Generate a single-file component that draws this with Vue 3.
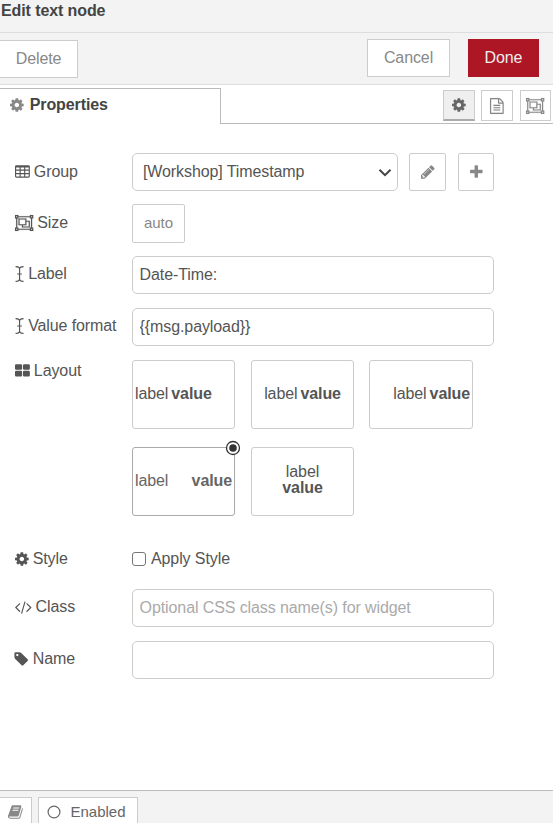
<script setup>
import { h, ref } from 'vue'

const icons = {
  cog: { w: 1536, x: 128, d: 'M1152 896q0-106-75-181t-181-75-181 75-75 181 75 181 181 75 181-75 75-181zm512-109v222q0 12-8 23t-20 13l-185 28q-19 54-39 91 35 50 107 138 10 12 10 25t-9 23q-27 37-99 108t-94 71q-12 0-26-9l-138-108q-44 23-91 38-16 136-29 186-7 28-36 28h-222q-14 0-24.5-8.5t-11.5-21.5l-28-184q-49-16-90-37l-141 107q-10 9-25 9-14 0-25-11-126-114-165-168-7-10-7-23 0-12 8-23 15-21 51-66.5t54-70.5q-27-50-41-99l-183-27q-13-2-21-12.5t-8-23.5v-222q0-12 8-23t19-13l186-28q14-46 39-92-40-57-107-138-10-12-10-24 0-10 9-23 26-36 98.5-107.5t94.5-71.5q13 0 26 10l138 107q44-23 91-38 16-136 29-186 7-28 36-28h222q14 0 24.5 8.5t11.5 21.5l28 184q49 16 90 37l142-107q9-9 24-9 13 0 25 10 129 119 165 170 7 8 7 22 0 12-8 23-15 21-51 66.5t-54 70.5q26 50 41 98l183 28q13 2 21 12.5t8 23.5z' },
  pencil: { w: 1536, x: 128, d: 'M491 1536l91-91-235-235-91 91v107h128v128h107zm523-928q0-22-22-22-10 0-17 7l-542 542q-7 7-7 17 0 22 22 22 10 0 17-7l542-542q7-7 7-17zm-54-192l416 416-832 832h-416v-416zm683 96q0 53-37 90l-166 166-416-416 166-165q36-38 90-38 53 0 91 38l235 234q37 39 37 91z' },
  plus: { w: 1408, x: 192, d: 'M1600 736v192q0 40-28 68t-68 28h-416v416q0 40-28 68t-68 28h-192q-40 0-68-28t-28-68v-416h-416q-40 0-68-28t-28-68v-192q0-40 28-68t68-28h416v-416q0-40 28-68t68-28h192q40 0 68 28t28 68v416h416q40 0 68 28t28 68z' },
  file: { w: 1536, x: 128, s: 10, d: 'M1596 380q28 28 48 76t20 88v1152q0 40-28 68t-68 28h-1344q-40 0-68-28t-28-68v-1600q0-40 28-68t68-28h896q40 0 88 20t76 48zm-444-244v376h376q-10-29-22-41l-313-313q-12-12-41-22zm384 1528v-1024h-416q-40 0-68-28t-28-68v-416h-768v1536h1280zm-1024-864q0-14 9-23t23-9h704q14 0 23 9t9 23v64q0 14-9 23t-23 9h-704q-14 0-23-9t-9-23v-64zm736 224q14 0 23 9t9 23v64q0 14-9 23t-23 9h-704q-14 0-23-9t-9-23v-64q0-14 9-23t23-9h704zm0 256q14 0 23 9t9 23v64q0 14-9 23t-23 9h-704q-14 0-23-9t-9-23v-64q0-14 9-23t23-9h704z' },
  tag: { w: 1536, x: 192, d: 'M576 448q0-53-37.5-90.5t-90.5-37.5-90.5 37.5-37.5 90.5 37.5 90.5 90.5 37.5 90.5-37.5 37.5-90.5zm1067 576q0 53-37 90l-491 492q-39 37-91 37-53 0-90-37l-715-716q-38-37-64.5-101t-26.5-117v-416q0-52 38-90t90-38h416q53 0 117 26.5t102 64.5l715 714q37 39 37 91z' },
  code: { w: 1856, x: -32, d: 'M553 1399l-50 50q-10 10-23 10t-23-10l-466-466q-10-10-10-23t10-23l466-466q10-10 23-10t23 10l50 50q10 10 10 23t-10 23l-393 393 393 393q10 10 10 23t-10 23zm591-1067l-373 1291q-4 13-15.5 19.5t-23.5 2.5l-62-17q-13-4-19.5-15.5t-2.5-24.5l373-1291q4-13 15.5-19.5t23.5-2.5l62 17q13 4 19.5 15.5t2.5 24.5zm657 651l-466 466q-10 10-23 10t-23-10l-50-50q-10-10-10-23t10-23l393-393-393-393q-10-10-10-23t10-23l50-50q10-10 23-10t23 10l466 466q10 10 10 23t-10 23z' },
  book: { w: 1664, x: 64, d: 'M1703 478q40 57 18 129l-275 906q-19 64-76.5 107.5t-122.5 43.5h-923q-77 0-148.5-53.5t-99.5-131.5q-24-67-2-127 0-4 3-27t4-37q1-8-3-21.5t-3-19.5q2-11 8-21t16.5-23.5 16.5-23.5q23-38 45-91.5t30-91.5q3-10 .5-30t-.5-28q3-11 17-28t17-23q21-36 42-92t25-90q1-9-2.5-32t.5-28q4-13 22-30.5t22-22.5q19-26 42.5-84.5t27.5-96.5q1-8-3-25.5t-2-26.5q2-8 9-18t18-23 17-21q8-12 16.5-30.5t15-35 16-36 19.5-32 26.5-23.5 36-11.5 47.5 5.5l-1 3q38-9 51-9h761q74 0 114 56t18 130l-274 906q-36 119-71.5 153.5t-128.5 34.5h-869q-27 0-38 15-11 16-1 43 24 70 144 70h923q29 0 56-15.5t35-41.5l300-987q7-22 5-57 38 15 59 43zm-1064 2q-4 13 2 22.5t20 9.5h608q13 0 25.5-9.5t16.5-22.5l21-64q4-13-2-22.5t-20-9.5h-608q-13 0-25.5 9.5t-16.5 22.5zm-83 256q-4 13 2 22.5t20 9.5h608q13 0 25.5-9.5t16.5-22.5l21-64q4-13-2-22.5t-20-9.5h-608q-13 0-25.5 9.5t-16.5 22.5z' },
  table: { w: 1664, x: 0, d: 'M160 128h1344q66 0 113 47t47 113v1088q0 66-47 113t-113 47H160q-66 0-113-47t-47-113V288q0-66 47-113t113-47zM128 384v240h384V384zM640 384v240h384V384zM1152 384v240h384V384zM128 752v256h384V752zM640 752v256h384V752zM1152 752v256h384V752zM128 1136v240q0 32 32 32h352v-272zM640 1136v272h384v-272zM1152 1136v272h352q32 0 32-32v-240z' },
  large: { w: 1664, x: 0, d: 'M128 128h544q128 0 128 128v384q0 128-128 128H128Q0 768 0 640V256Q0 128 128 128zM1024 128h512q128 0 128 128v384q0 128-128 128h-512q-128 0-128-128V256q0-128 128-128zM128 880h544q128 0 128 128v384q0 128-128 128H128Q0 1520 0 1392v-384Q0 880 128 880zM1024 880h512q128 0 128 128v384q0 128-128 128h-512q-128 0-128-128v-384q0-128 128-128z' },
  group: { w: 2048, x: 0, s: 12, d: 'M2048 384h-128v1024h128v384h-384v-128H384v128H0v-384h128V384H0V0h384v128h1280V0h384zM1792 128v128h128V128zM128 128v128h128V128zM256 1664v-128H128v128zM1664 1536v-128h128V384h-128V256H384v128H256v1024h128v128zM1920 1664v-128h-128v128zM1280 640h384v768H768v-256H384V384h896zM512 1024h640V512H512zM1536 1280V768h-256v384H896v128z' },
  cursor: { w: 1024, x: 0, d: 'M960 128Q576 128 576 352v480h192v128H576v480q0 224 384 224v128q-320 0-448-136Q384 1792 64 1792v-128q384 0 384-224V960H256V832h192V352q0-224-384-224V0q320 0 448 136Q640 0 960 0z' }
}

function Icon(props) {
  const icon = icons[props.name]
  return h('svg', {
    viewBox: `${icon.x} 0 ${icon.w} 1792`,
    width: (icon.w * 16) / 1792,
    height: 16,
    fill: 'currentColor',
    stroke: icon.s ? 'currentColor' : 'none',
    'stroke-width': icon.s || 0,
    'fill-rule': 'evenodd',
    overflow: 'visible',
    'aria-hidden': 'true'
  }, [h('path', { d: icon.d })])
}
Icon.props = ['name']

const label = ref('Date-Time:')
const format = ref('{{msg.payload}}')
const cssClass = ref('')
const name = ref('')
const applyStyle = ref(false)
const layouts = ['left', 'center', 'right', 'spread', 'stacked']
const selected = ref('spread')
</script>

<template>
  <div class="tray">
    <header class="title">Edit text node</header>

    <div class="toolbar">
      <button class="btn delete">Delete</button>
      <div class="actions">
        <button class="btn cancel">Cancel</button>
        <button class="btn done">Done</button>
      </div>
    </div>

    <nav class="tabs">
      <div class="tab"><Icon name="cog" class="tab-icon" />Properties</div>
      <div class="tab-buttons">
        <button class="btn small active"><Icon name="cog" /></button>
        <button class="btn small"><Icon name="file" /></button>
        <button class="btn small last"><Icon name="group" /></button>
      </div>
    </nav>

    <main class="form">
      <div class="row">
        <label class="caption"><Icon name="table" />Group</label>
        <div class="select">
          <span>[Workshop] Timestamp</span>
          <svg class="chevron" width="14" height="9" viewBox="0 0 14 9"><path d="M1.5 1.7L7 7.2l5.5-5.5" /></svg>
        </div>
        <button class="btn edit"><Icon name="pencil" /></button>
        <button class="btn add"><Icon name="plus" /></button>
      </div>

      <div class="row size">
        <label class="caption"><Icon name="group" />Size</label>
        <button class="btn auto">auto</button>
      </div>

      <div class="row">
        <label class="caption raised"><Icon name="cursor" />Label</label>
        <input v-model="label" class="field" type="text" />
      </div>

      <div class="row">
        <label class="caption raised"><Icon name="cursor" />Value format</label>
        <input v-model="format" class="field" type="text" />
      </div>

      <div class="row layout-row">
        <label class="caption"><Icon name="large" />Layout</label>
        <div class="layouts">
          <div
            v-for="kind in layouts"
            :key="kind"
            class="layout"
            :class="[kind, { selected: selected === kind }]"
            @click="selected = kind"
          >
            <span>label</span><b>value</b>
            <svg v-if="selected === kind" class="radio" width="16" height="16" viewBox="0 0 16 16">
              <circle cx="8" cy="8" r="6.5" />
              <circle class="dot" cx="8" cy="8" r="3.8" />
            </svg>
          </div>
        </div>
      </div>

      <div class="row style-row">
        <label class="caption"><Icon name="cog" />Style</label>
        <label class="check"><input v-model="applyStyle" type="checkbox" />Apply Style</label>
      </div>

      <div class="row">
        <label class="caption raised"><Icon name="code" />Class</label>
        <input v-model="cssClass" class="field" type="text" placeholder="Optional CSS class name(s) for widget" />
      </div>

      <div class="row">
        <label class="caption raised"><Icon name="tag" />Name</label>
        <input v-model="name" class="field" type="text" />
      </div>
    </main>

    <footer class="footer">
      <button class="btn help"><Icon name="book" /></button>
      <button class="btn enabled">
        <svg width="14" height="14" viewBox="0 0 14 14"><circle cx="7" cy="7" r="5.9" /></svg>
        <span>Enabled</span>
      </button>
    </footer>
  </div>
</template>

<style>
body {
  margin: 0;
  overflow: hidden;
}
</style>

<style scoped>
* {
  box-sizing: border-box;
}
.tray {
  display: flex;
  flex-direction: column;
  width: 553px;
  height: 823px;
  overflow: hidden;
  background: #fff;
  color: #555;
  font: 16px/20px "Liberation Sans", Arial, sans-serif;
  letter-spacing: -0.1px;
}
button,
input {
  margin: 0;
  font: inherit;
  letter-spacing: inherit;
}
svg {
  display: block;
  flex: none;
}
.title {
  height: 33px;
  padding: 1px 1px 0;
  border-bottom: 1px solid #ddd;
  background: #f3f3f3;
  color: #444;
  font-weight: bold;
}
.btn {
  display: flex;
  align-items: center;
  justify-content: center;
  flex: none;
  padding: 0;
  border: 1px solid #ccc;
  background: #fff;
  color: #888;
}
.toolbar {
  display: flex;
  justify-content: space-between;
  height: 52px;
  padding: 6px 14px 0 0;
  border-bottom: 1px solid #ddd;
  background: #f3f3f3;
}
.delete {
  width: 79px;
  height: 38px;
  margin: 1px 0 0 -1px;
}
.actions {
  display: flex;
  gap: 18px;
}
.cancel {
  width: 83px;
  height: 38px;
}
.done {
  width: 71px;
  height: 38px;
  border-color: #ad1625;
  background: #ad1625;
  color: #eee;
}
.tabs {
  display: flex;
  justify-content: space-between;
  height: 39px;
  padding-top: 3px;
  background: linear-gradient(#bbb, #bbb) bottom / 100% 1px no-repeat;
}
.tab {
  display: flex;
  align-items: center;
  width: 221px;
  height: 36px;
  padding: 0 0 3px 10px;
  border: solid #bbb;
  border-width: 1px 1px 0 0;
  background: #fff;
  color: #444;
  font-weight: bold;
}
.tab-icon {
  margin-right: 6px;
  color: #888;
}
.tab-buttons {
  display: flex;
  gap: 6px;
  padding: 2px 2px 0 0;
}
.small {
  width: 32px;
  height: 31px;
}
.small.last {
  width: 31px;
  margin-left: 1px;
}
.small.active {
  border-bottom: 2px solid #aaa;
  background: #efefef;
  color: #666;
}
.form {
  flex: 1;
  padding: 29px 0 0 15px;
}
.row {
  display: flex;
  margin-bottom: 14px;
}
.caption {
  display: flex;
  align-items: center;
  gap: 4px;
  width: 117px;
  height: 37px;
  white-space: nowrap;
}
.caption.raised {
  height: 35px;
}
.select {
  display: flex;
  align-items: center;
  justify-content: space-between;
  width: 266px;
  height: 38px;
  padding: 0 5px 1px 10px;
  border: 1px solid #ccc;
  border-radius: 5px;
}
.chevron {
  margin-top: 2px;
  fill: none;
  stroke: #444;
  stroke-width: 2;
}
.edit,
.add {
  height: 38px;
  border-radius: 2px;
}
.edit {
  width: 37px;
  margin-left: 11px;
}
.add {
  width: 36px;
  margin-left: 12px;
}
.size {
  margin: -1px 0 13px;
}
.auto {
  width: 53px;
  height: 39px;
  padding-bottom: 1px;
  border-radius: 2px;
  font-size: 15px;
}
.field {
  width: 362px;
  height: 38px;
  padding: 0 6.6px 1px;
  border: 1px solid #ccc;
  border-radius: 5px;
  outline: none;
  background: #fff;
  color: #555;
}
.field::placeholder {
  color: #aaa;
  opacity: 1;
}
.layout-row .caption {
  height: 21px;
}
.layouts {
  display: grid;
  grid-template-columns: 103px 103px 103px;
  column-gap: 16px;
  row-gap: 18px;
}
.layout:nth-child(3) {
  margin-left: -1px;
}
.layout {
  position: relative;
  display: flex;
  align-items: center;
  gap: 3px;
  height: 69px;
  padding: 0 2px 2px;
  border: 1px solid #ccc;
  border-radius: 3px;
  line-height: 16px;
}
.center {
  justify-content: center;
}
.right {
  justify-content: flex-end;
}
.spread {
  justify-content: space-between;
}
.stacked {
  flex-direction: column;
  justify-content: center;
  gap: 0;
  padding-bottom: 4px;
}
.selected {
  border-color: #aaa;
  color: #666;
}
.radio {
  position: absolute;
  top: -8px;
  right: -7px;
  fill: #fff;
  stroke: #333;
  stroke-width: 1.3;
}
.dot {
  fill: #333;
  stroke: none;
}
.style-row {
  margin: 24px 0 12px;
}
.check {
  display: flex;
  align-items: center;
  gap: 5px;
}
.check input {
  appearance: none;
  width: 14px;
  height: 14px;
  margin-top: 1px;
  border: 1px solid #767676;
  border-radius: 3px;
  background: #fff;
}
.footer {
  display: flex;
  gap: 6px;
  height: 33px;
  padding-top: 6px;
  border-top: 1px solid #bbb;
  background: #f3f3f3;
}
.help {
  width: 33px;
  height: 30px;
  margin-left: -1px;
}
.enabled {
  gap: 9px;
  width: 100px;
  height: 30px;
  padding-right: 3px;
  color: #666;
  font-size: 15px;
  letter-spacing: 0;
}
.enabled svg {
  fill: none;
  stroke: #666;
  stroke-width: 1.2;
}
</style>
